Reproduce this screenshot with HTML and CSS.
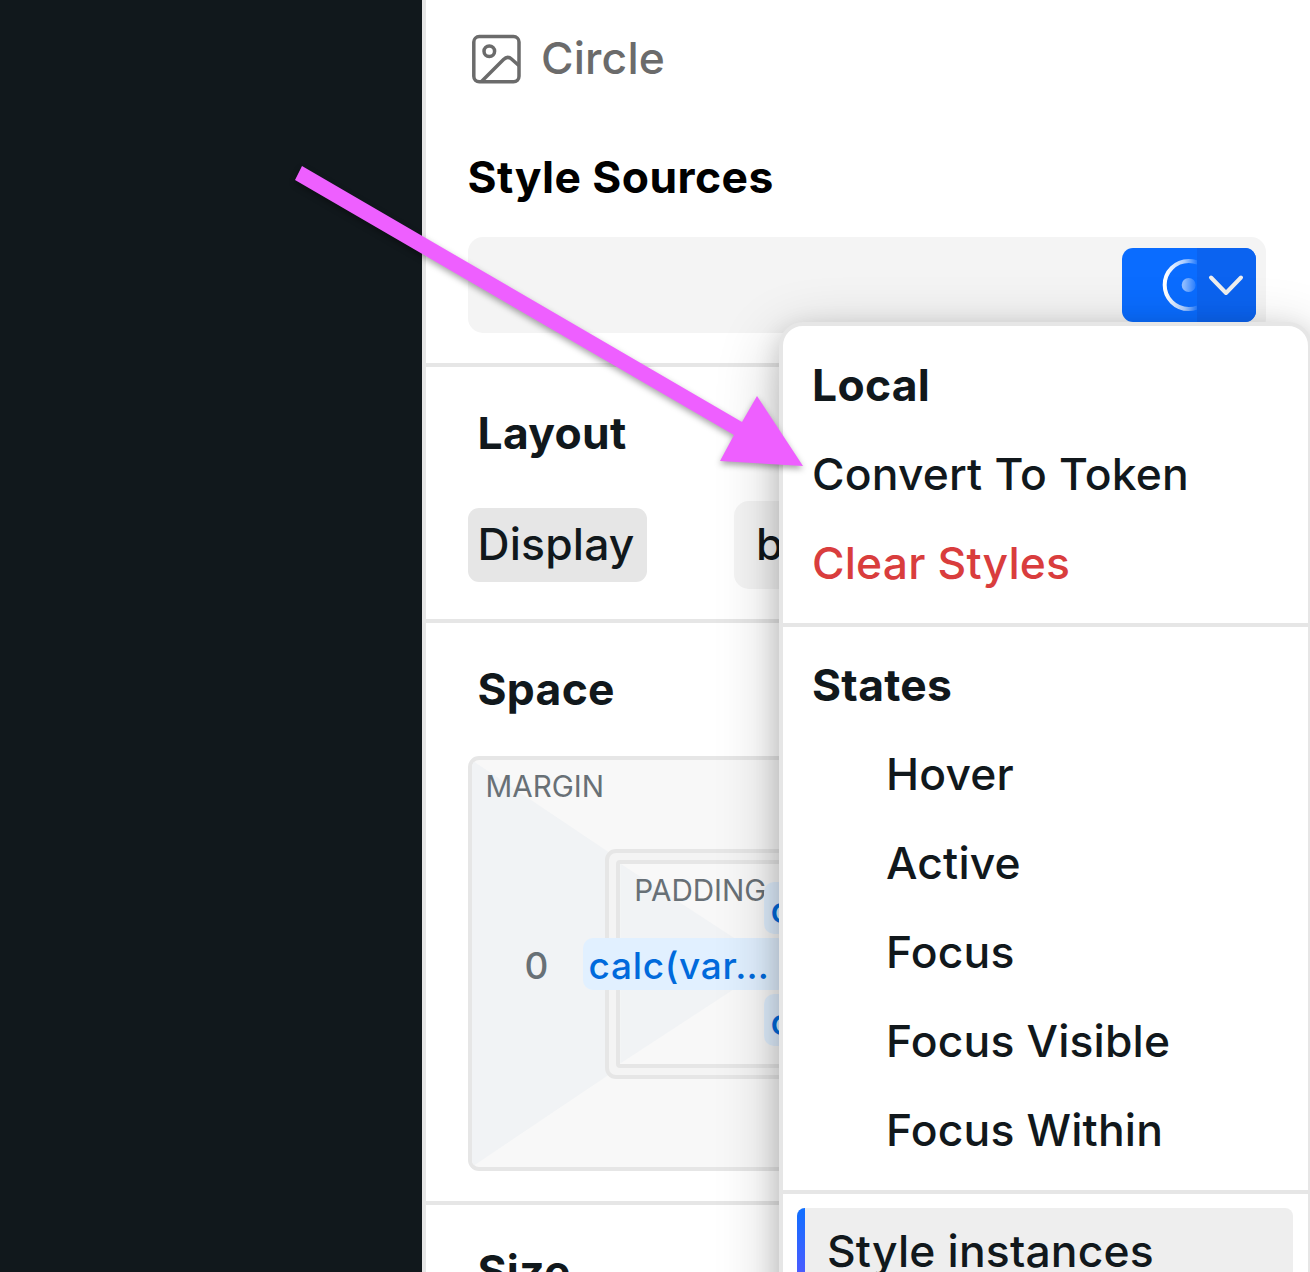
FILE: index.html
```html
<!DOCTYPE html>
<html lang="en">
  <head>
    <meta charset="UTF-8" />
    <meta name="viewport" content="width=device-width, initial-scale=1.0" />
    <title>Style panel</title>
    <link rel="stylesheet" href="styles.css">
  </head>
  <body>
    <div class="canvas"></div>

    <aside class="panel">
      <header class="instance">
        <svg class="instance-icon" viewBox="0 0 50 50" fill="none" stroke="currentColor" stroke-width="3.5">
          <rect x="2.8" y="2.6" width="45.2" height="45.2" rx="5.5" />
          <circle cx="18.3" cy="17.3" r="5.3" />
          <path d="M10.5 47.5 32.5 25.5Q36.5 21.5 40.5 25L47.8 31.5" />
        </svg>
        <span>Circle</span>
      </header>

      <section class="sources">
        <h2>Style Sources</h2>
        <div class="source-input">
          <button class="source" type="button">
            <span class="source-label">
              <svg viewBox="0 0 75 74" fill="none">
                <defs>
                  <linearGradient id="fade" gradientUnits="userSpaceOnUse" x1="44" y1="0" x2="75" y2="0">
                    <stop offset="0" stop-color="#fff" />
                    <stop offset="0.6" stop-color="#fff" stop-opacity="0.65" />
                    <stop offset="1" stop-color="#fff" stop-opacity="0.1" />
                  </linearGradient>
                </defs>
                <circle cx="66.7" cy="37" r="24" stroke="url(#fade)" stroke-width="4" />
                <circle cx="66.7" cy="37" r="7" fill="url(#fade)" opacity="0.8" />
              </svg>
            </span>
            <span class="source-menu">
              <svg viewBox="0 0 59 74" fill="none" stroke="#eee" stroke-width="4" stroke-linecap="round" stroke-linejoin="round">
                <path d="M14 29.5 29 45 44 29.5" />
              </svg>
            </span>
          </button>
        </div>
      </section>

      <section class="section layout">
        <h2>Layout</h2>
        <div class="property">
          <label class="property-name">Display</label>
          <div class="select">block</div>
        </div>
      </section>

      <section class="section space">
        <h2>Space</h2>
        <div class="margin-box">
          <span class="box-name">MARGIN</span>
          <span class="margin-value">0</span>
          <div class="padding-frame">
            <div class="padding-box">
              <span class="box-name">PADDING</span>
            </div>
          </div>
          <span class="value value-top">calc(var…</span>
          <span class="value value-left">calc(var…</span>
          <span class="value value-bottom">calc(var…</span>
        </div>
      </section>

      <section class="section size">
        <h2>Size</h2>
      </section>
    </aside>

    <div class="menu">
      <div class="menu-group">
        <h3>Local</h3>
        <div class="menu-item">Convert To Token</div>
        <div class="menu-item destructive">Clear Styles</div>
      </div>
      <div class="menu-group states">
        <h3>States</h3>
        <div class="menu-item indent">Hover</div>
        <div class="menu-item indent">Active</div>
        <div class="menu-item indent">Focus</div>
        <div class="menu-item indent">Focus Visible</div>
        <div class="menu-item indent">Focus Within</div>
      </div>
      <div class="hint">Style instances</div>
    </div>

    <svg class="arrow" viewBox="0 0 1310 1272">
      <polygon points="302,166 742,422 757,396 803,466 720,461 734,435 295,180" fill="#ee5fff" />
    </svg>
  </body>
</html>
```

FILE: styles.css
```css
* {
  box-sizing: border-box;
}

html {
  height: 1272px;
  overflow: hidden;
}

body {
  position: relative;
  display: flex;
  width: 1310px;
  height: 1272px;
  margin: 0;
  overflow: hidden;
  font-family: "Inter", sans-serif;
  font-size: 44.4px;
  font-weight: 450;
  line-height: 60px;
  letter-spacing: 0.18px;
  color: #11181c;
  background: #fff;
}

h2,
h3 {
  margin: 0;
  font-size: inherit;
  font-weight: 700;
  letter-spacing: 0.3px;
}

.canvas {
  width: 422px;
  background: #11181c;
}

.panel {
  flex: 1;
  height: 1272px;
  overflow: hidden;
  border-left: 4px solid #e6e6e6;
}

.instance {
  display: flex;
  align-items: center;
  gap: 20px;
  height: 118px;
  padding: 0 0 0 45px;
  color: #6b6b6b;
}

.instance span {
  margin-top: -2px;
}

.instance-icon {
  width: 50px;
  height: 50px;
}

.sources {
  height: 245px;
  padding: 29px 44px 0 41.5px;
  color: #000;
}

.sources h2 {
  letter-spacing: 0.45px;
}

.source-input {
  display: flex;
  justify-content: flex-end;
  height: 96px;
  margin-top: 30px;
  padding: 11px 10px;
  border-radius: 15px;
  background: #f4f4f4;
}

.source {
  display: flex;
  width: 134px;
  height: 74px;
  padding: 0;
  overflow: hidden;
  border: none;
  border-radius: 11px;
  background: #0a6cff;
}

.source svg {
  display: block;
  height: 74px;
}

.source-label {
  width: 75px;
}

.source-menu {
  width: 59px;
  background: #0b63f0;
}

.section {
  border-top: 4px solid #e6e6e6;
  padding: 36px 44px 0 41.5px;
}

.section h2 {
  padding-left: 10px;
}

.layout {
  height: 256px;
}

.property {
  display: flex;
  align-items: center;
  justify-content: space-between;
  height: 88px;
  margin-top: 38px;
}

.property-name {
  width: 179px;
  height: 74px;
  padding: 6px 10px;
  border-radius: 11px;
  background: #e6e6e6;
}

.select {
  width: 532px;
  height: 88px;
  padding: 13px 22px;
  border-radius: 15px;
  background: #f4f4f4;
}

.space {
  height: 582px;
}

.margin-box {
  position: relative;
  display: grid;
  place-items: center;
  height: 415px;
  margin-top: 37px;
  border: 4px solid #e6e6e6;
  border-radius: 11px;
  background: #f8f8f8;
  overflow: hidden;
}

/* left side of each box is a darker wedge */
.margin-box::before,
.padding-box::before {
  content: "";
  position: absolute;
  inset: 0 auto 0 0;
  background: #f1f3f5;
  clip-path: polygon(0 0, 100% 50%, 0 100%);
}

.margin-box::before {
  width: 303px;
}

.padding-box::before {
  width: 153px;
}

.box-name {
  position: absolute;
  top: 8px;
  left: 14px;
  font-size: 29.6px;
  font-weight: 400;
  line-height: 36px;
  letter-spacing: 0;
  color: #687076;
}

.margin-value {
  position: absolute;
  top: 176px;
  left: 53px;
  font-size: 37px;
  font-weight: 500;
  color: #687076;
}

.padding-frame {
  position: relative;
  width: 523px;
  height: 230px;
  padding: 7px;
  border: 4px solid #e6e6e6;
  border-radius: 11px;
  background: #f4f4f4;
}

.padding-box {
  position: relative;
  height: 100%;
  border: 4px solid #e6e6e6;
  border-radius: 4px;
  background: #f8f8f8;
}

.value {
  position: absolute;
  height: 52px;
  padding: 0 7px;
  border-radius: 10px;
  font-size: 37px;
  font-weight: 500;
  line-height: 55px;
  letter-spacing: 0.7px;
  color: #006adc;
  background: #e1f0ff;
}

.value-top {
  top: 122px;
  left: 292px;
}

.value-left {
  top: 178px;
  left: 111px;
  width: 205px;
  padding-left: 6px;
}

.value-bottom {
  top: 234px;
  left: 292px;
}

.menu {
  position: absolute;
  top: 322px;
  left: 779px;
  width: 533px;
  height: 1100px;
  border: 4px solid #e6e6e6;
  border-radius: 24px;
  background: #fff;
  box-shadow: 0 7px 26px rgba(0, 0, 0, 0.14), 0 18px 63px rgba(0, 0, 0, 0.24);
}

.menu-group {
  padding: 15px 0 15px 29px;
  border-bottom: 4px solid #e6e6e6;
}

.states {
  padding-top: 14px;
}

.menu-group h3,
.menu-item {
  height: 89px;
  line-height: 89px;
}

.destructive {
  color: #d93d3d;
}

.indent {
  padding-left: 74px;
}

.hint {
  position: relative;
  height: 160px;
  margin: 14px 15px 0 14px;
  padding: 13px 30px;
  overflow: hidden;
  border-radius: 8px;
  background: #eee;
}

.hint::before {
  content: "";
  position: absolute;
  inset: 0 auto 0 0;
  width: 8px;
  background: linear-gradient(#0f6fff, #4a5cff 64px, #8a4dff);
}

.arrow {
  position: absolute;
  inset: 0;
  width: 1310px;
  height: 1272px;
  filter: drop-shadow(0 3px 3px rgba(0, 0, 0, 0.35));
}
```
